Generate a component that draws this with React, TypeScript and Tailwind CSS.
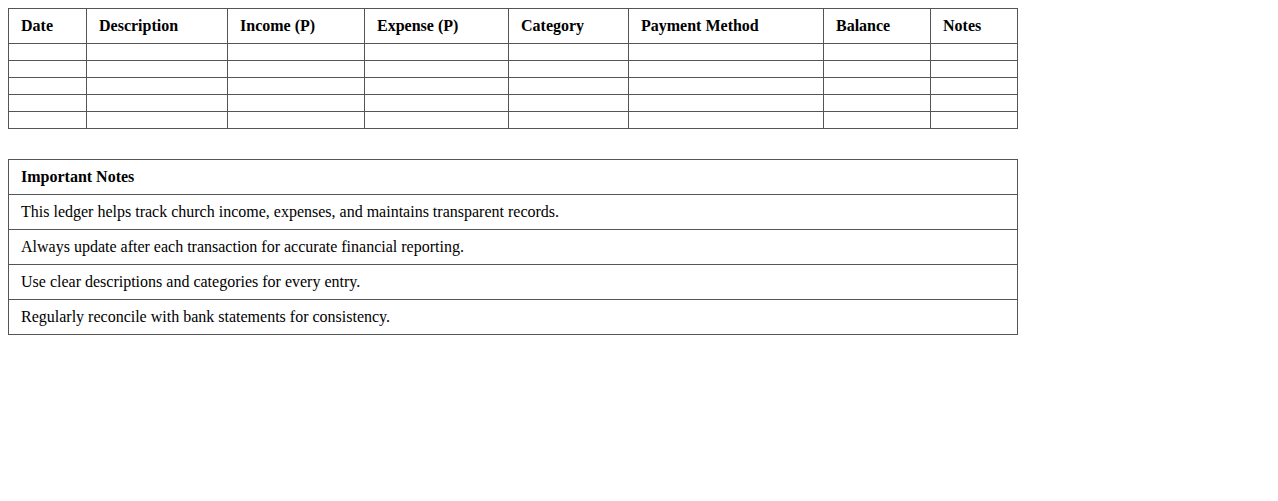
import React from 'react';

const columns = [
  { label: 'Date', width: 'w-[78px]' },
  { label: 'Description', width: 'w-[141px]' },
  { label: 'Income (P)', width: 'w-[137px]' },
  { label: 'Expense (P)', width: 'w-[144px]' },
  { label: 'Category', width: 'w-[120px]' },
  { label: 'Payment Method', width: 'w-[195px]' },
  { label: 'Balance', width: 'w-[107px]' },
  { label: 'Notes', width: 'w-[87px]' },
];

const notes = [
  'This ledger helps track church income, expenses, and maintains transparent records.',
  'Always update after each transaction for accurate financial reporting.',
  'Use clear descriptions and categories for every entry.',
  'Regularly reconcile with bank statements for consistency.',
];

const cell = 'border border-[#555] px-3 py-2 text-left';

export default function App() {
  return (
    <div className="min-h-screen bg-white p-2 text-black text-base leading-[18px] font-['Liberation_Serif','Times_New_Roman',serif]">
      <table className="w-[1010px] table-fixed border-collapse">
        <thead>
          <tr>
            {columns.map((c) => (
              <th key={c.label} className={`${cell} ${c.width} font-bold`}>
                {c.label}
              </th>
            ))}
          </tr>
        </thead>
        <tbody>
          {[0, 1, 2, 3, 4].map((r) => (
            <tr key={r}>
              {columns.map((c) => (
                <td key={c.label} className={cell}></td>
              ))}
            </tr>
          ))}
        </tbody>
      </table>

      <table className="mt-[30px] w-[1010px] border-collapse">
        <thead>
          <tr>
            <th className={`${cell} font-bold`}>Important Notes</th>
          </tr>
        </thead>
        <tbody>
          {notes.map((n) => (
            <tr key={n}>
              <td className={cell}>{n}</td>
            </tr>
          ))}
        </tbody>
      </table>
    </div>
  );
}
